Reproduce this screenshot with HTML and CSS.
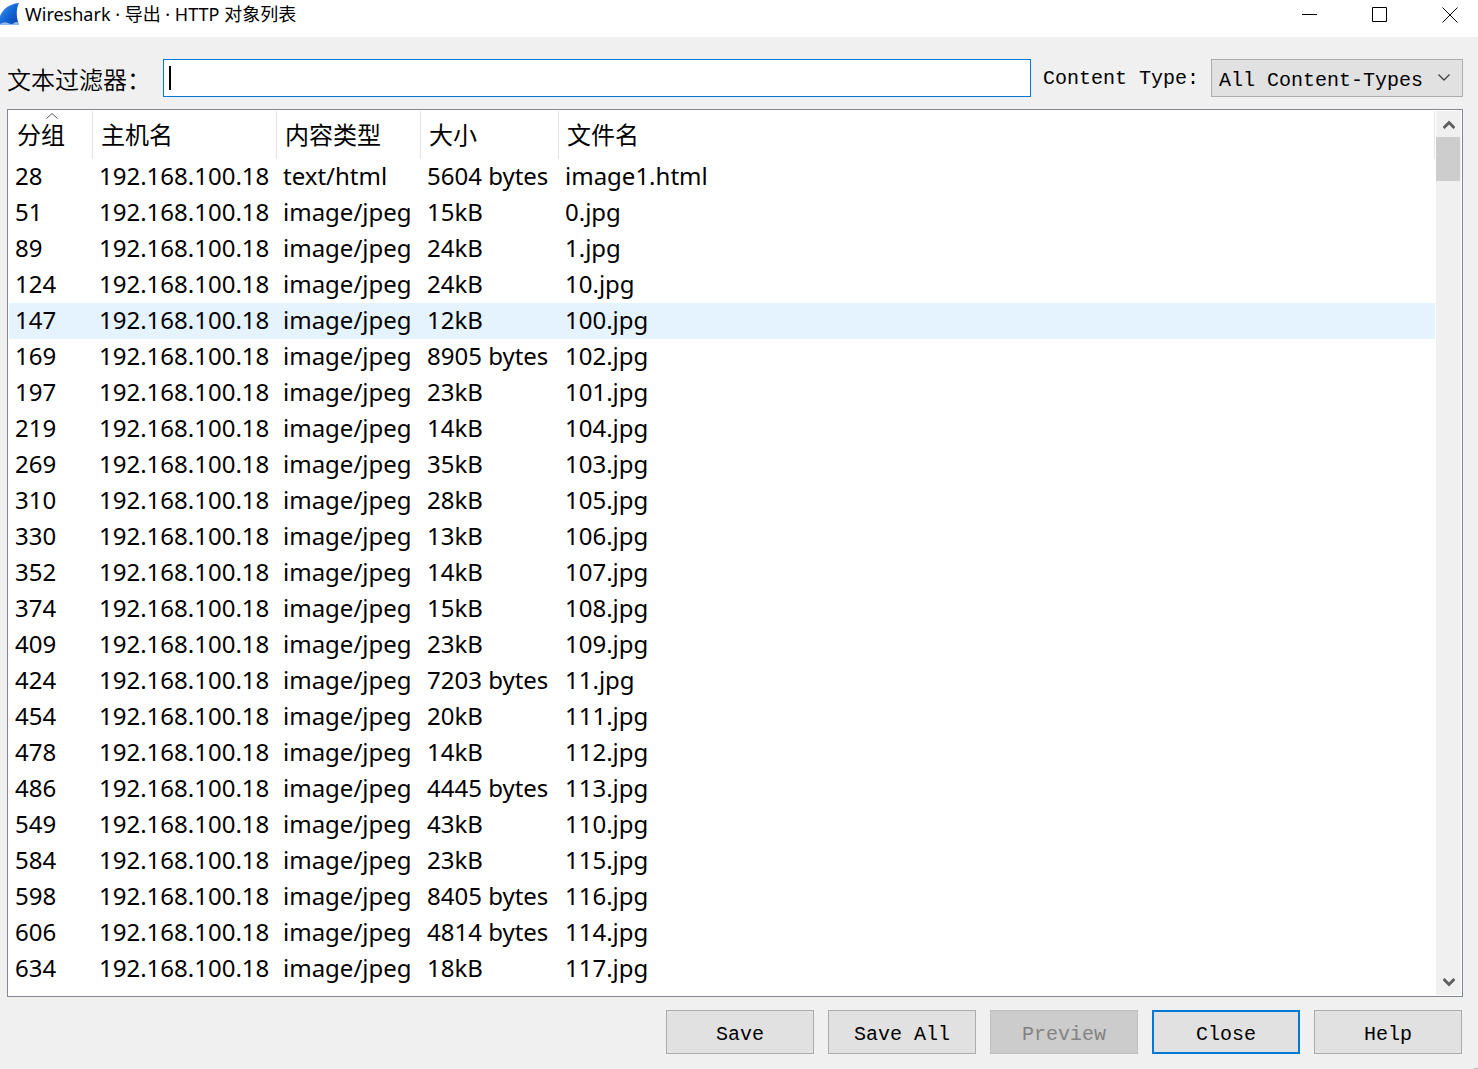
FILE: index.html
```
<!DOCTYPE html>
<html lang="zh-CN">
<head>
<meta charset="utf-8">
<meta name="viewport" content="width=device-width, initial-scale=1">
<title>Wireshark · 导出 · HTTP 对象列表</title>
<link rel="stylesheet" href="styles.css">
</head>
<body>
<div class="window">
  <header class="titlebar">
    <svg class="app-icon" width="20" height="23" viewBox="0 0 20 23" aria-hidden="true">
      <defs>
        <linearGradient id="fin" x1="0" y1="0" x2="1" y2="1">
          <stop offset="0" stop-color="#4a9af0"/>
          <stop offset="0.5" stop-color="#1266d6"/>
          <stop offset="1" stop-color="#0a3fa8"/>
        </linearGradient>
      </defs>
      <path d="M0 22V13C3 6 9 1 19 0C16 6 16 14 19 22Z" fill="url(#fin)"/>
      <path d="M0 21Q4 18 8 20T14 20T19 20V22H0Z" fill="#8fb8ea"/>
    </svg>
    <h1 class="title">Wireshark · 导出 · HTTP 对象列表</h1>
    <div class="window-buttons">
      <button class="window-button" type="button" aria-label="最小化"><svg width="16" height="16" viewBox="0 0 16 16"><path d="M0 7.5H15"/></svg></button>
      <button class="window-button" type="button" aria-label="最大化"><svg width="16" height="16" viewBox="0 0 16 16"><path d="M.5 .5H14.5V14.5H.5Z"/></svg></button>
      <button class="window-button" type="button" aria-label="关闭"><svg width="16" height="16" viewBox="0 0 16 16"><path d="M.5 .5L15.5 15.5M15.5 .5L.5 15.5"/></svg></button>
    </div>
  </header>

  <main class="content">
    <div class="filters">
      <label class="filter-label" for="filter">文本过滤器：</label>
      <div class="filter-box"><span class="caret"></span><input id="filter" class="filter-input" type="text"></div>
      <label class="type-label" for="content-type">Content Type:</label>
      <div class="select-box">
        <select id="content-type" class="select"><option>All Content-Types</option></select>
        <svg class="select-arrow" width="12" height="7" viewBox="0 0 12 7" aria-hidden="true"><path d="M.5 .5L6 6L11.5 .5"/></svg>
      </div>
    </div>

    <div class="list">
      <div class="viewport">
        <table class="objects">
          <colgroup><col class="col-packet"><col class="col-host"><col class="col-type"><col class="col-size"><col></colgroup>
          <thead>
            <tr>
              <th class="sorted" aria-sort="ascending">分组<svg class="sort-arrow" width="12" height="6" viewBox="0 0 12 6" aria-hidden="true"><path d="M.5 5.5L6 .5L11.5 5.5"/></svg></th>
              <th>主机名</th><th>内容类型</th><th>大小</th><th>文件名</th>
            </tr>
          </thead>
          <tbody>
            <tr><td>28</td><td>192.168.100.18</td><td>text/html</td><td>5604 bytes</td><td>image1.html</td></tr>
            <tr><td>51</td><td>192.168.100.18</td><td>image/jpeg</td><td>15kB</td><td>0.jpg</td></tr>
            <tr><td>89</td><td>192.168.100.18</td><td>image/jpeg</td><td>24kB</td><td>1.jpg</td></tr>
            <tr><td>124</td><td>192.168.100.18</td><td>image/jpeg</td><td>24kB</td><td>10.jpg</td></tr>
            <tr class="hovered"><td>147</td><td>192.168.100.18</td><td>image/jpeg</td><td>12kB</td><td>100.jpg</td></tr>
            <tr><td>169</td><td>192.168.100.18</td><td>image/jpeg</td><td>8905 bytes</td><td>102.jpg</td></tr>
            <tr><td>197</td><td>192.168.100.18</td><td>image/jpeg</td><td>23kB</td><td>101.jpg</td></tr>
            <tr><td>219</td><td>192.168.100.18</td><td>image/jpeg</td><td>14kB</td><td>104.jpg</td></tr>
            <tr><td>269</td><td>192.168.100.18</td><td>image/jpeg</td><td>35kB</td><td>103.jpg</td></tr>
            <tr><td>310</td><td>192.168.100.18</td><td>image/jpeg</td><td>28kB</td><td>105.jpg</td></tr>
            <tr><td>330</td><td>192.168.100.18</td><td>image/jpeg</td><td>13kB</td><td>106.jpg</td></tr>
            <tr><td>352</td><td>192.168.100.18</td><td>image/jpeg</td><td>14kB</td><td>107.jpg</td></tr>
            <tr><td>374</td><td>192.168.100.18</td><td>image/jpeg</td><td>15kB</td><td>108.jpg</td></tr>
            <tr><td>409</td><td>192.168.100.18</td><td>image/jpeg</td><td>23kB</td><td>109.jpg</td></tr>
            <tr><td>424</td><td>192.168.100.18</td><td>image/jpeg</td><td>7203 bytes</td><td>11.jpg</td></tr>
            <tr><td>454</td><td>192.168.100.18</td><td>image/jpeg</td><td>20kB</td><td>111.jpg</td></tr>
            <tr><td>478</td><td>192.168.100.18</td><td>image/jpeg</td><td>14kB</td><td>112.jpg</td></tr>
            <tr><td>486</td><td>192.168.100.18</td><td>image/jpeg</td><td>4445 bytes</td><td>113.jpg</td></tr>
            <tr><td>549</td><td>192.168.100.18</td><td>image/jpeg</td><td>43kB</td><td>110.jpg</td></tr>
            <tr><td>584</td><td>192.168.100.18</td><td>image/jpeg</td><td>23kB</td><td>115.jpg</td></tr>
            <tr><td>598</td><td>192.168.100.18</td><td>image/jpeg</td><td>8405 bytes</td><td>116.jpg</td></tr>
            <tr><td>606</td><td>192.168.100.18</td><td>image/jpeg</td><td>4814 bytes</td><td>114.jpg</td></tr>
            <tr><td>634</td><td>192.168.100.18</td><td>image/jpeg</td><td>18kB</td><td>117.jpg</td></tr>
            <tr><td>669</td><td>192.168.100.18</td><td>image/jpeg</td><td>19kB</td><td>118.jpg</td></tr>
          </tbody>
        </table>
      </div>
      <div class="scrollbar" aria-hidden="true">
        <svg class="scroll-arrow" width="12" height="9" viewBox="0 0 12 9"><path d="M.5 8L6 2.5L11.5 8"/></svg>
        <div class="scroll-track"><div class="scroll-thumb"></div></div>
        <svg class="scroll-arrow" width="12" height="9" viewBox="0 0 12 9"><path d="M.5 1L6 6.5L11.5 1"/></svg>
      </div>
    </div>

    <footer class="actions">
      <button class="button" type="button">Save</button>
      <button class="button" type="button">Save All</button>
      <button class="button" type="button" disabled>Preview</button>
      <button class="button button-default" type="button">Close</button>
      <button class="button" type="button">Help</button>
    </footer>
  </main>
</div>
</body>
</html>
```
FILE: styles.css
```
* { box-sizing: border-box; }

body {
  margin: 0;
  background: #f0f0f0;
  color: #000;
  font-family: "Noto Sans", "Noto Sans CJK SC", sans-serif;
}

svg { display: block; fill: none; }

.window {
  display: flex;
  flex-direction: column;
  height: 100vh;
}

/* Title bar */
.titlebar {
  display: flex;
  align-items: flex-start;
  height: 37px;
  flex: none;
  background: #fff;
}
.app-icon { margin-top: 3px; }
.title {
  flex: 1;
  margin: 0 0 0 5px;
  font-size: 18px;
  font-weight: 400;
  line-height: 28px;
}
.window-buttons { display: flex; gap: 14px; }
.window-button {
  display: flex;
  align-items: center;
  justify-content: center;
  width: 56px;
  height: 30px;
  padding: 0;
  border: 0;
  background: none;
}
.window-button path { stroke: #000; }

/* Dialog body */
.content {
  display: flex;
  flex: 1;
  flex-direction: column;
  min-height: 0;
  padding: 22px 15px 15px 7px;
  background: linear-gradient(#bbb, #bbb) right bottom / 4px 1px no-repeat;
}

.filters,
.select,
.button {
  font-family: "Liberation Mono", "Noto Sans CJK SC", monospace;
  font-size: 20px;
}
.filters {
  display: flex;
  align-items: center;
  gap: 12px;
  margin-bottom: 12px;
}
.filter-label,
.type-label {
  padding-top: 2px;
  line-height: 36px;
  white-space: nowrap;
}
.filter-label {
  font-family: "Noto Sans CJK SC", sans-serif;
  font-size: 24px;
  font-weight: 350;
}
.filter-box {
  display: flex;
  flex: 1;
  align-items: center;
  min-width: 0;
  height: 38px;
  padding-left: 5px;
  border: 1px solid #0078d7;
  background: #fff;
}
.caret { width: 2px; height: 24px; background: #000; }
.filter-input {
  flex: 1;
  min-width: 0;
  height: 36px;
  padding: 0;
  border: 0;
  outline: 0;
  background: none;
  font-size: 24px;
}
.select-box { position: relative; width: 252px; }
.select {
  display: block;
  width: 100%;
  height: 38px;
  padding: 4px 28px 0 7px;
  border: 1px solid #adadad;
  border-radius: 0;
  appearance: none;
  background: #e1e1e1;
  color: #000;
}
.select-arrow { position: absolute; top: 15px; right: 13px; pointer-events: none; }
.select-arrow path { stroke: #444; stroke-width: 1.4; }

/* Object list */
.list {
  display: flex;
  flex: 1;
  gap: 1px;
  min-height: 0;
  padding: 1px;
  border: 1px solid #828790;
  background: #fff;
}
.viewport { flex: 1; min-width: 0; overflow: hidden; }
.objects {
  width: 100%;
  border-collapse: separate;
  border-spacing: 0;
  table-layout: fixed;
  font-size: 24px;
}
.col-packet { width: 84px; }
.col-host { width: 184px; }
.col-type { width: 144px; }
.col-size { width: 138px; }
.objects th {
  height: 48px;
  padding: 0 0 0 8px;
  border-right: 1px solid #e5e5e5;
  font-weight: 400;
  line-height: 36px;
  text-align: left;
}
.objects td {
  height: 36px;
  padding: 0 0 2px 6px;
  line-height: 34px;
  white-space: nowrap;
}
.hovered { background: #e5f3ff; }
.sorted { position: relative; }
.sort-arrow { position: absolute; top: 2px; left: 37px; }
.sort-arrow path { stroke: #555; }

.scrollbar {
  display: flex;
  flex-direction: column;
  align-items: center;
  width: 25px;
  background: #f0f0f0;
}
.scroll-arrow { flex: none; margin: 9px 0 8px; }
.scroll-arrow path { stroke: #606060; stroke-width: 3; }
.scroll-track { flex: 1; width: 100%; }
.scroll-thumb { width: 24px; height: 44px; background: #cdcdcd; }

/* Buttons */
.actions {
  display: flex;
  justify-content: flex-end;
  gap: 14px;
  margin: 13px 1px 0 0;
}
.button {
  width: 148px;
  height: 44px;
  padding: 4px 0 0;
  border: 1px solid #adadad;
  background: #e1e1e1;
  color: #000;
}
.button:disabled { border-color: #bfbfbf; background: #ccc; color: #838383; }
.button-default { border: 2px solid #0078d7; }
```
